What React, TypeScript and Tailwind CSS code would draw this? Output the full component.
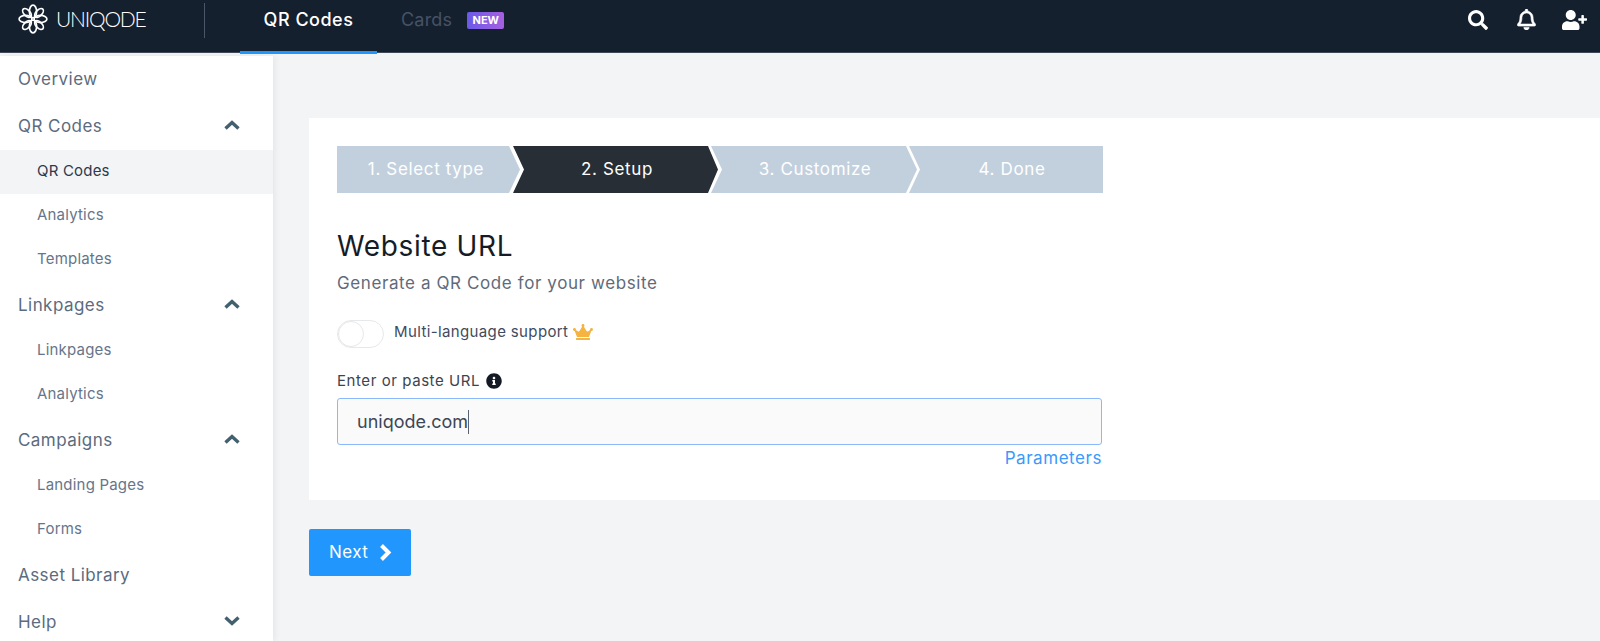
import { FaSearch, FaRegBell, FaUserPlus, FaCrown, FaInfoCircle } from "react-icons/fa";

const font = "[font-family:Inter,'Noto_Sans',sans-serif]";

type NavItem = { label: string; kind: "top" | "sub"; chevron?: "up" | "down"; active?: boolean };

const NAV: NavItem[] = [
  { label: "Overview", kind: "top" },
  { label: "QR Codes", kind: "top", chevron: "up" },
  { label: "QR Codes", kind: "sub", active: true },
  { label: "Analytics", kind: "sub" },
  { label: "Templates", kind: "sub" },
  { label: "Linkpages", kind: "top", chevron: "up" },
  { label: "Linkpages", kind: "sub" },
  { label: "Analytics", kind: "sub" },
  { label: "Campaigns", kind: "top", chevron: "up" },
  { label: "Landing Pages", kind: "sub" },
  { label: "Forms", kind: "sub" },
  { label: "Asset Library", kind: "top" },
  { label: "Help", kind: "top", chevron: "down" },
];

function Logo() {
  return (
    <svg viewBox="0 0 30 30" className="h-[30px] w-[30px]" fill="none" stroke="white" strokeWidth="1.7">
      {[0, 90, 180, 270].map((r) => (
        <g key={r} transform={`rotate(${r} 15 15)`}>
          <ellipse cx="15" cy="7.5" rx="3.6" ry="6.4" />
          <ellipse cx="9" cy="9" rx="3" ry="5.4" transform="rotate(-45 9 9)" />
        </g>
      ))}
    </svg>
  );
}

function NavChevron({ dir }: { dir: "up" | "down" }) {
  return (
    <svg viewBox="0 0 16 10" className="mb-[3px] h-[10px] w-[16px]" fill="none" stroke="#43606f" strokeWidth="3.4">
      <path d={dir === "up" ? "M1.5 8.5 8 2.5l6.5 6" : "M1.5 1.5 8 7.5l6.5-6"} />
    </svg>
  );
}

function TopBar() {
  return (
    <header className="relative flex h-[53px] items-start border-b border-[#3f4957] bg-[#15202f]">
      <div className="ml-[18px] flex h-[38px] w-[186px] items-center">
        <Logo />
        <span className="ml-[8px] text-[21px] font-light tracking-[-1.2px] text-white [font-family:Lato,sans-serif]">UNIQODE</span>
      </div>
      <div className="mt-[3px] h-[35px] w-[1px] bg-[#4a5568]" />
      <div className="relative ml-[35px] flex h-[54px] w-[137px] justify-center border-b-[3px] border-[#2196fc] pt-[6px] text-[18px] font-medium tracking-[0.5px] text-white">
        <span className="leading-[28px]">QR Codes</span>
      </div>
      <div className="ml-[24px] flex items-center pt-[6px]">
        <span className="text-[18px] leading-[28px] tracking-[0.2px] text-[#465264]">Cards</span>
        <span className="ml-[15px] flex h-[17px] w-[37px] items-center justify-center rounded-[2px] bg-gradient-to-r from-[#6a5ae8] to-[#a65fe0] text-[11px] font-bold text-white">
          NEW
        </span>
      </div>
      <div className="ml-auto flex items-center pt-[9px] text-white">
        <FaSearch className="h-[20px] w-[20px]" />
        <FaRegBell stroke="currentColor" strokeWidth={16} className="ml-[29px] h-[21px] w-[19px]" />
        <FaUserPlus className="mr-[13px] ml-[26px] h-[20px] w-[25px]" />
      </div>
    </header>
  );
}

function Sidebar() {
  return (
    <aside className="mt-[3px] w-[273px] shrink-0 bg-white shadow-[2px_0_6px_rgba(0,0,0,0.06)]">
      {NAV.map((item, i) => (
        <div
          key={i}
          className={
            item.kind === "top"
              ? "flex h-[47px] items-center justify-between pr-[33px] pl-[18px] text-[17px] tracking-[0.45px] text-[#5b6b80]"
              : `flex h-[44px] items-center pb-[1px] pl-[37px] text-[15px] tracking-[0.2px] ${item.active ? "bg-[#f3f4f6] text-[#2c3a4e]" : "text-[#66758a]"}`
          }
        >
          <span>{item.label}</span>
          {item.chevron && <NavChevron dir={item.chevron} />}
        </div>
      ))}
    </aside>
  );
}

function Stepper() {
  return (
    <div className="flex h-[47px] w-[766px] text-[17px] tracking-[0.65px] text-white">
      <div className="flex w-[183px] items-center justify-center bg-[#c2d0de] pt-[1px] pr-[5px] [clip-path:polygon(0_0,172px_0,100%_50%,172px_100%,0_100%)]">
        1. Select type
      </div>
      <div className="-ml-[7px] flex w-[205px] items-center justify-center bg-[#272e36] pt-[1px] pl-[3px] [clip-path:polygon(0_0,195px_0,100%_50%,195px_100%,0_100%,11px_50%)]">
        2. Setup
      </div>
      <div className="-ml-[7px] flex w-[206px] items-center justify-center bg-[#c2d0de] pt-[1px] pl-[2px] [clip-path:polygon(0_0,195px_0,100%_50%,195px_100%,0_100%,11px_50%)]">
        3. Customize
      </div>
      <div className="-ml-[8px] flex w-[194px] items-center justify-center bg-[#c2d0de] pt-[1px] pl-[12px] [clip-path:polygon(0_0,100%_0,100%_100%,0_100%,11px_50%)]">
        4. Done
      </div>
    </div>
  );
}

export default function App() {
  return (
    <div className={`flex h-[641px] flex-col overflow-hidden bg-[#f3f4f6] ${font}`}>
      <TopBar />
      <div className="flex min-h-0 flex-1">
        <Sidebar />
        <main className="min-w-0 flex-1 pt-[65px] pl-[36px]">
          <section className="h-[382px] bg-white pt-[28px] pl-[28px]">
            <Stepper />
            <h1 className="mt-[35px] text-[28px] leading-[36px] tracking-[0.65px] text-[#161c26]">Website URL</h1>
            <p className="mt-[7px] text-[17px] leading-[24px] tracking-[0.6px] text-[#5f6b7a]">Generate a QR Code for your website</p>
            <div className="mt-[25px] flex items-center">
              <div className="h-[28px] w-[47px] rounded-full border border-[#e6e8ea] bg-white">
                <div className="h-[26px] w-[26px] rounded-full border border-[#e6e8ea] bg-white" />
              </div>
              <span className="mb-[4px] ml-[10px] text-[15px] tracking-[0.37px] text-[#3f4b5e]">Multi-language support</span>
              <FaCrown className="mb-[4px] ml-[5px] h-[16px] w-[20px] text-[#f5b341]" />
            </div>
            <div className="mt-[22px] flex items-center text-[15px] leading-[22px] tracking-[0.57px] text-[#3d4450]">
              Enter or paste URL
              <FaInfoCircle className="ml-[6px] h-[16px] w-[16px] text-[#131a26]" />
            </div>
            <div className="mt-[6px] flex h-[47px] w-[765px] items-center rounded-[3px] border border-[#8ab8fb] bg-[#fafafa] pl-[19px] text-[18px] text-[#3d4756]">
              uniqode.com
              <span className="h-[24px] w-[1px] bg-[#5a6470]" />
            </div>
            <div className="mt-[1px] w-[765px] text-right text-[17px] leading-[24px] tracking-[0.55px] text-[#3b99fc]">Parameters</div>
          </section>
          <button className="mt-[29px] flex h-[47px] w-[102px] items-center rounded-[2px] bg-[#2196fc] pl-[20px] text-[17px] tracking-[0.4px] text-white">
            Next
            <svg viewBox="0 0 13 17" className="ml-[11px] h-[17px] w-[13px]" fill="none" stroke="white" strokeWidth="4">
              <path d="M2.5 1.5 9.5 8.5l-7 7" />
            </svg>
          </button>
        </main>
      </div>
    </div>
  );
}
